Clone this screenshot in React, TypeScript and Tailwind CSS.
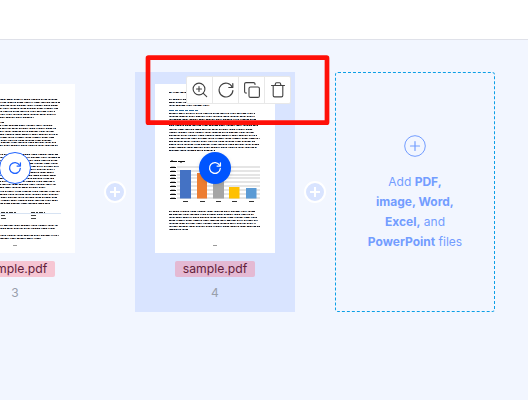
import React from "react";

type Line = [y: number, end: number];

// Miniature lines of text on a page thumbnail.
function TextLines({ lines, start = 14 }: { lines: Line[]; start?: number }) {
  return (
    <g fill="none" strokeWidth="1">
      {lines.map(([y, end], i) => (
        <g key={y}>
          <path d={`M${start} ${y + 0.5}H${end}`} stroke="#77777f" />
          <path d={`M${start} ${y + 0.5}H${end}`} stroke="#1b1b25" strokeDasharray="2 1 1 2 3 1 1 1 2 2" strokeDashoffset={i * 3} />
          <path d={`M${start + 2} ${y + 0.5}H${end}`} stroke="#5b8bb8" strokeDasharray="1 8 1 6" strokeDashoffset={i * 5} />
          <path d={`M${start + 6} ${y + 0.5}H${end}`} stroke="#b98a66" strokeDasharray="1 7 1 6" strokeDashoffset={i * 4} />
          <path d={`M${start + 3} ${y + 0.5}H${end}`} stroke="#d5dad8" strokeDasharray="1 6 1 9" strokeDashoffset={i * 7} />
        </g>
      ))}
    </g>
  );
}

const tableLines: Line[] = [
  [15, 103], [18, 105], [21, 103], [24, 103], [27, 100], [30, 101], [33, 79],
  [38, 49], [41, 98], [44, 101], [47, 99], [50, 103], [53, 99], [56, 97], [58, 101], [61, 103],
  [70, 103], [73, 105], [76, 103], [79, 103], [82, 104], [85, 100], [88, 99], [91, 101], [94, 99], [97, 100], [100, 101], [103, 91],
  [107, 105], [110, 104], [113, 102], [116, 103], [119, 95],
  [141, 103], [144, 100], [151, 104], [154, 86],
];

const chartLines: Line[] = [
  [8, 34], [15, 100], [18, 98], [21, 55],
  [29, 100], [32, 100], [35, 101], [38, 102], [41, 103],
  [45, 98], [48, 99], [51, 102], [54, 105], [57, 100], [60, 104], [63, 102], [66, 60],
  [127, 100], [130, 99], [133, 102], [136, 103], [139, 101], [142, 105], [145, 33],
];

function TablePage() {
  return (
    <svg width="120" height="169" viewBox="0 0 120 169" className="block shrink-0 bg-white">
      <TextLines lines={tableLines} />
      <path d="M14 129.500H106" stroke="#d7e3f3" />
      <path d="M46 128.500H62M76 128.500H90" stroke="#333" strokeDasharray="4 1 2 1" />
      <path d="M46 131.500h4M76 131.500h5M46 134.500h5M76 134.500h5" stroke="#444" />
      <path d="M58 161.500h4" stroke="#999" />
    </svg>
  );
}

function ChartPage() {
  const bars: [number, number, number, string][] = [
    [25, 86, 11, "#4472c4"],
    [42, 89, 10, "#ed7d31"],
    [58, 95, 11, "#a5a5a5"],
    [74, 103, 10.5, "#ffc000"],
    [91, 104, 10.5, "#5b9bd5"],
  ];
  return (
    <svg width="120" height="169" viewBox="0 0 120 169" className="block shrink-0 bg-white">
      <TextLines lines={chartLines} />
      <path d="M14 26.500H43" stroke="#2b6597" strokeDasharray="5 1 3 1" />
      <path d="M15 77.500H31" stroke="#111" strokeDasharray="7 1" />
      <path d="M16 76.500h2M25 78.500h2" stroke="#888" />
      {[83, 87, 91, 94, 98, 102, 106, 110, 114].map((y) => (
        <g key={y}>
          <rect x="22" y={y - 1} width="83" height="2" fill="#e5e5e5" />
          <path d={`M15 ${y + 0.5}h6`} stroke="#111" />
          <path d={`M16 ${y - 0.5}h4`} stroke="#ccc" />
        </g>
      ))}
      {bars.map(([x, y, w, fill]) => (
        <g key={x}>
          <rect x={x} y={y} width={w} height={114.5 - y} fill={fill} />
          <path d={`M${x + 3} 117.500h5`} stroke="#333" />
        </g>
      ))}
      <path d="M58 161.500h4" stroke="#999" />
    </svg>
  );
}

function RotateIcon() {
  return (
    <svg width="14" height="14" viewBox="0 0 14 14" fill="none" stroke="currentColor" strokeWidth="1.3" strokeLinecap="round" strokeLinejoin="round">
      <path d="M12.300 7.500A5.400 5.400 0 1 1 11.600 4.300" />
      <path d="M12.400 1.800v3.300H9.100" />
    </svg>
  );
}

function ToolbarRotateIcon() {
  return (
    <svg width="16" height="16" viewBox="0 0 16 16" fill="none" stroke="currentColor" strokeWidth="1.200" strokeLinecap="round" strokeLinejoin="round">
      <path d="M14.900 8.500A6.900 6.900 0 1 1 14.300 5.200" />
      <path d="M14.800 1.500v4h-4" />
    </svg>
  );
}

function ZoomIcon() {
  return (
    <svg width="16" height="16" viewBox="0 0 16 16" fill="none" stroke="currentColor" strokeWidth="1.1" strokeLinecap="round">
      <circle cx="7" cy="7" r="5.900" />
      <path d="M11.300 11.300 14.700 14.700M4.500 7h5M7 4.500v5" />
    </svg>
  );
}

function CopyIcon() {
  return (
    <svg width="16" height="16" viewBox="0 0 16 16" fill="none" stroke="currentColor" strokeWidth="1.1" strokeLinecap="round">
      <rect x="5" y="5" width="10.400" height="10.400" rx="1.500" />
      <path d="M2.500 11H2A1.400 1.400 0 0 1 .6 9.600V2A1.400 1.400 0 0 1 2 .6h7.600A1.400 1.400 0 0 1 11 2v.5" />
    </svg>
  );
}

function TrashIcon() {
  return (
    <svg width="16" height="16" viewBox="0 0 16 16" fill="none" stroke="currentColor" strokeWidth="1.1" strokeLinecap="round" strokeLinejoin="round">
      <path d="M1.500 3.500h13M5 3.500l.6-2.200Q5.800.7 6.500.7h3q.7 0 .9.600L11 3.500M3.200 4v9.600q0 1.300 1.300 1.300h7q1.300 0 1.300-1.300V4" />
    </svg>
  );
}

function PageCard({ number, selected = false, children }: { number: number; selected?: boolean; children: React.ReactNode }) {
  return (
    <div className={`relative flex h-60 w-40 shrink-0 flex-col items-center pt-3 ${selected ? "bg-[#d9e4ff]" : ""}`}>
      {children}
      <button
        className={`absolute left-16 top-20 flex size-8 items-center justify-center rounded-full ${
          selected ? "bg-[#0055ff] text-white shadow-[0_1px_4px_#0000001a]" : "border border-[#1f63ff] bg-white text-[#1f63ff]"
        }`}
      >
        <RotateIcon />
      </button>
      <div className={`mt-2 h-4 w-20 shrink-0 rounded-[2px] text-center text-[12.2px] leading-4 text-[#612039] ${selected ? "bg-[#e4b9d3]" : "bg-[#f6c6d3]"}`}>
        sample.pdf
      </div>
      <div className="mt-2 text-[12px] leading-4 text-[#999fab]">{number}</div>
    </div>
  );
}

function InsertButton() {
  return (
    <div className="flex h-60 w-10 shrink-0 items-center justify-center">
      <button className="flex size-[22px] items-center justify-center rounded-full border-2 border-white bg-[#d9e4ff]">
        <svg width="10" height="10" viewBox="0 0 10 10" stroke="white" strokeWidth="2">
          <path d="M5 0v10M0 5h10" />
        </svg>
      </button>
    </div>
  );
}

export default function App() {
  return (
    <div className="relative flex h-[400px] w-[528px] flex-col overflow-hidden bg-[#f2f6ff] font-['Inter',sans-serif]">
      <header className="h-10 shrink-0 border-b border-[#dfe1e9] bg-white" />
      <main className="-ml-[65px] mt-8 flex">
        <PageCard number={3}>
          <TablePage />
        </PageCard>
        <InsertButton />
        <PageCard number={4} selected>
          <ChartPage />
          <div className="absolute left-[51px] top-1 flex h-7 w-[105px] divide-x divide-[#e8e8e8] rounded-[2px] border border-[#e8e8e8] bg-white text-[#414141]">
            <button className="flex flex-1 items-center justify-center"><ZoomIcon /></button>
            <button className="flex flex-1 items-center justify-center"><ToolbarRotateIcon /></button>
            <button className="flex flex-1 items-center justify-center"><CopyIcon /></button>
            <button className="flex flex-1 items-center justify-center"><TrashIcon /></button>
          </div>
        </PageCard>
        <InsertButton />
        <div className="flex h-60 w-40 shrink-0 flex-col items-center rounded-[3px] border border-dashed border-[#0c9fe6] pt-[62px] text-center text-[#739dff]">
          <svg width="22" height="22" viewBox="0 0 22 22" fill="none" stroke="currentColor">
            <circle cx="11" cy="11" r="10.300" />
            <path d="M11 6.500v9M6.500 11h9" strokeLinecap="round" strokeWidth="1.200" />
          </svg>
          <p className="mt-[15px] text-[12px] leading-5">
            Add <b>PDF,</b><br />
            <b>image, Word,</b><br />
            <b>Excel,</b> and<br />
            <b>PowerPoint</b> files
          </p>
        </div>
      </main>
      <svg className="absolute left-[140px] top-[50px]" width="195" height="80" fill="none">
        <rect x="8" y="7.700" width="179" height="65" rx=".5" stroke="#ff1008" strokeWidth="4.700" strokeLinejoin="round" />
      </svg>
    </div>
  );
}
